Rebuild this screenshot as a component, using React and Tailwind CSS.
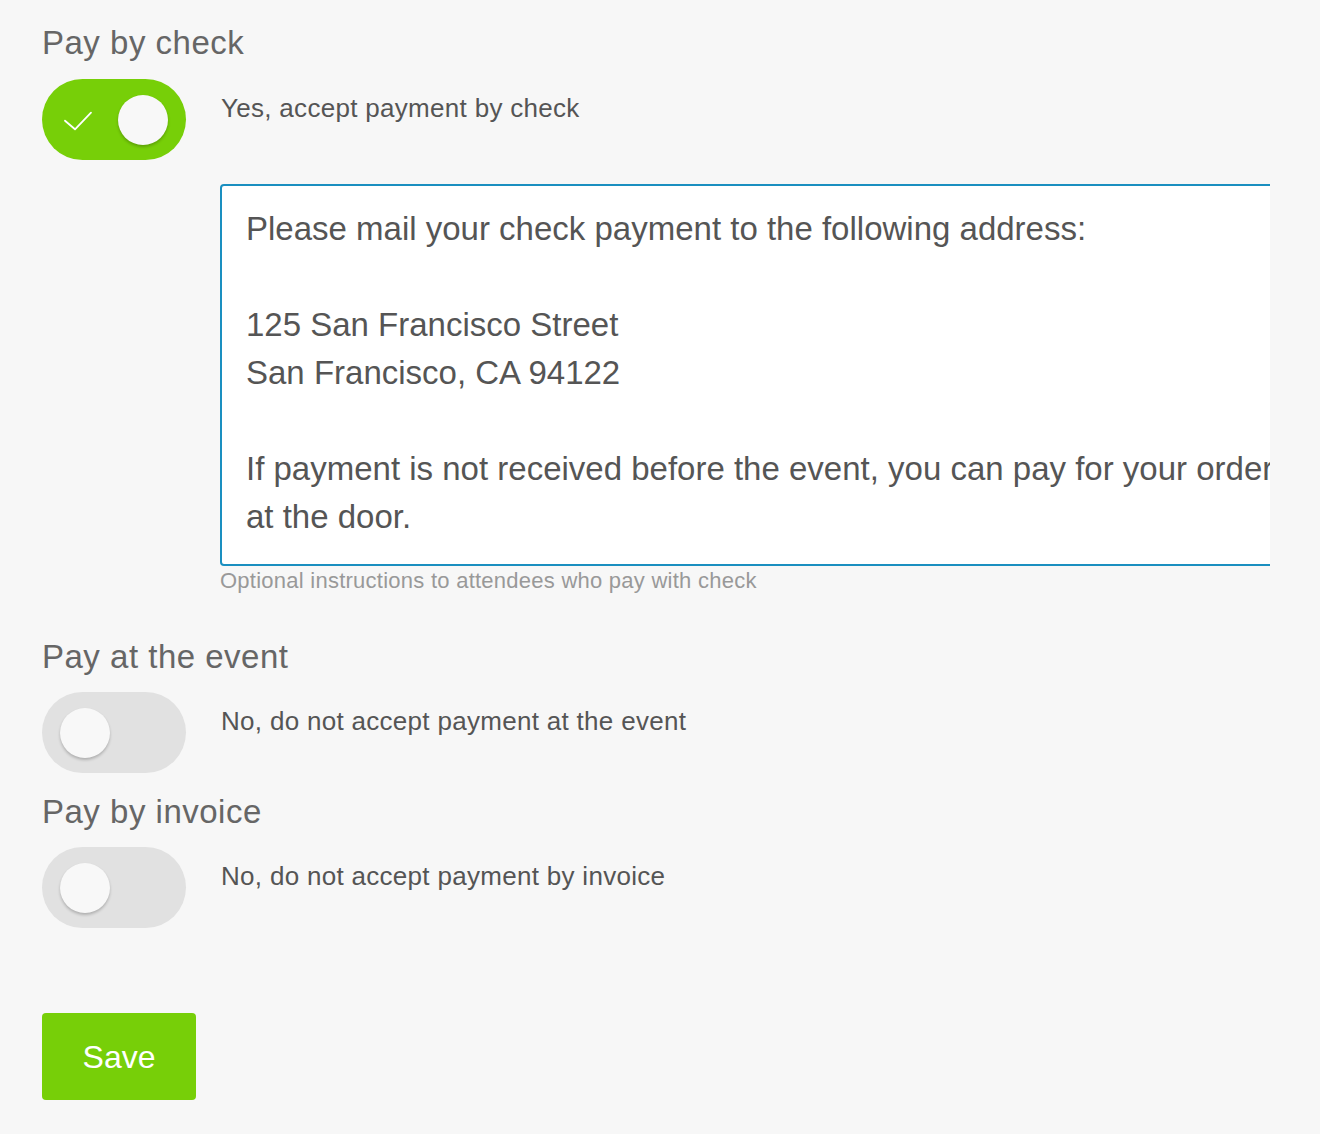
import { useState } from "react";

const CHECK_LINES = [
  "Please mail your check payment to the following address:",
  "",
  "125 San Francisco Street",
  "San Francisco, CA 94122",
  "",
  "If payment is not received before the event, you can pay for your order",
  "at the door.",
];

function Toggle({ on, onChange }) {
  return (
    <button
      type="button"
      onClick={() => onChange(!on)}
      className={`relative flex h-[81px] w-[144px] shrink-0 items-center rounded-full ${
        on ? "justify-end bg-[#77cf08] pr-[18px]" : "justify-start bg-[#e1e1e1] pl-[18px]"
      }`}
    >
      {on && (
        <svg
          className="absolute left-[21px] top-[31px]"
          width="30"
          height="22"
          viewBox="0 0 30 22"
          fill="none"
        >
          <path d="M2 10.7 L12 19.3 L28 2.7" stroke="#ffffff" strokeWidth="1.8" strokeLinecap="round" strokeLinejoin="round" />
        </svg>
      )}
      <span className="h-[50px] w-[50px] rounded-full bg-[#f8f8f8] shadow-[0_2px_3px_rgba(0,0,0,0.22)]" />
    </button>
  );
}

function PaymentOption({ title, on, onChange, yesText, noText, className }) {
  return (
    <div className={className}>
      <h2 className="text-[33px] leading-[40px] tracking-[0.5px] text-[#666]">{title}</h2>
      <div className="mt-[15px] flex gap-[35px]">
        <Toggle on={on} onChange={onChange} />
        <p className="pt-[13px] text-[26px] leading-[32px] tracking-[0.3px] text-[#555]">{on ? yesText : noText}</p>
      </div>
    </div>
  );
}

export default function App() {
  const [check, setCheck] = useState(true);
  const [atEvent, setAtEvent] = useState(false);
  const [invoice, setInvoice] = useState(false);

  return (
    <div className="min-h-screen bg-[#f7f7f7] pl-[42px] pt-[23px] font-['Liberation_Sans',Arial,sans-serif]">
      <div className="w-[1228px] overflow-hidden">
        {/* Pay by check */}
        <h2 className="text-[33px] leading-[40px] tracking-[0.5px] text-[#666]">Pay by check</h2>
        <div className="mt-[16px] flex gap-[35px]">
          <Toggle on={check} onChange={setCheck} />
          <p className="pt-[13px] text-[26px] leading-[32px] tracking-[0.3px] text-[#555]">
            {check ? "Yes, accept payment by check" : "No, do not accept payment by check"}
          </p>
        </div>

        {check && (
          <div className="ml-[178px] mt-[24px]">
            <div className="w-[1100px] rounded-[4px] border-2 border-[#1a8fc0] bg-white pb-[23px] pl-[24px] pt-[19px] text-[33px] leading-[48px] text-[#555]">
              {CHECK_LINES.map((line, i) => (
                <div key={i} className="h-[48px] whitespace-nowrap">
                  {line}
                </div>
              ))}
            </div>
            <p className="mt-[3px] text-[22px] leading-[24px] tracking-[0.25px] text-[#999]">
              Optional instructions to attendees who pay with check
            </p>
          </div>
        )}

        <PaymentOption
          className="mt-[44px]"
          title="Pay at the event"
          on={atEvent}
          onChange={setAtEvent}
          yesText="Yes, accept payment at the event"
          noText="No, do not accept payment at the event"
        />

        <PaymentOption
          className="mt-[19px]"
          title="Pay by invoice"
          on={invoice}
          onChange={setInvoice}
          yesText="Yes, accept payment by invoice"
          noText="No, do not accept payment by invoice"
        />

        <button
          type="button"
          className="mt-[85px] h-[87px] w-[154px] rounded-[4px] bg-[#77cf08] text-[32px] text-white"
        >
          Save
        </button>
      </div>
    </div>
  );
}
